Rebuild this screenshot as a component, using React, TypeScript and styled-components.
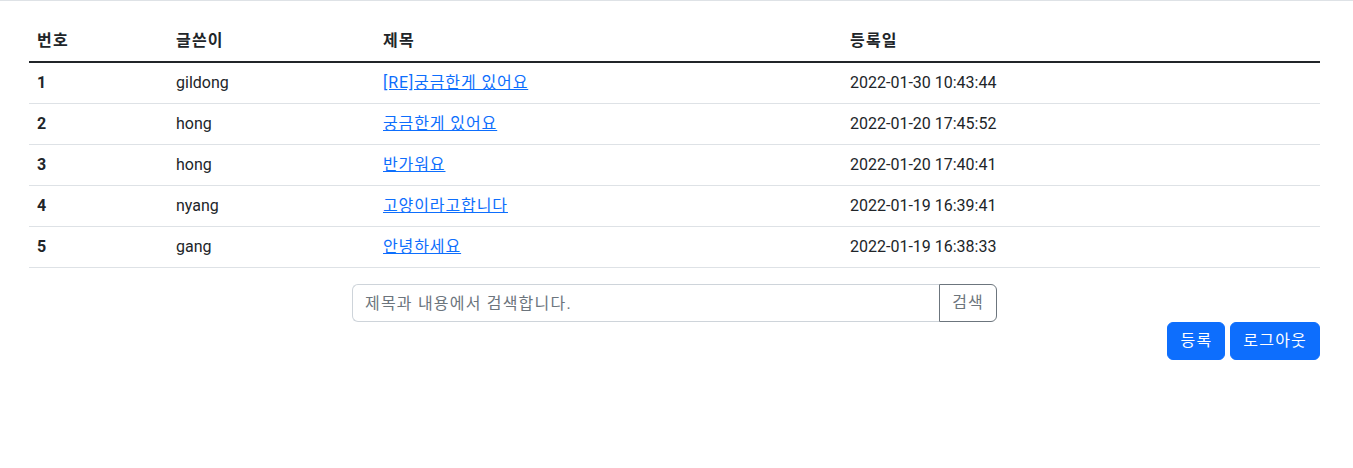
import styled, { createGlobalStyle } from "styled-components";

interface IPost {
    no: number;
    writer: string;
    title: string;
    regDate: string;
}

const posts: IPost[] = [
    {no: 1, writer: "gildong", title: "[RE]궁금한게 있어요", regDate: "2022-01-30 10:43:44"},
    {no: 2, writer: "hong", title: "궁금한게 있어요", regDate: "2022-01-20 17:45:52"},
    {no: 3, writer: "hong", title: "반가워요", regDate: "2022-01-20 17:40:41"},
    {no: 4, writer: "nyang", title: "고양이라고합니다", regDate: "2022-01-19 16:39:41"},
    {no: 5, writer: "gang", title: "안녕하세요", regDate: "2022-01-19 16:38:33"},
];

export default function App() {
    return <>
        <GlobalStyle/>
        <Page>
            <Table>
                <colgroup>
                    <col style={{width: 139}}/>
                    <col style={{width: 207}}/>
                    <col style={{width: 467}}/>
                    <col/>
                </colgroup>
                <thead>
                <tr>
                    <HeadCell>번호</HeadCell>
                    <HeadCell>글쓴이</HeadCell>
                    <HeadCell>제목</HeadCell>
                    <HeadCell>등록일</HeadCell>
                </tr>
                </thead>
                <tbody>
                {posts.map(post => <tr key={post.no}>
                    <RowHead scope="row">{post.no}</RowHead>
                    <Cell>{post.writer}</Cell>
                    <Cell><TitleLink href="#">{post.title}</TitleLink></Cell>
                    <Cell>{post.regDate}</Cell>
                </tr>)}
                </tbody>
            </Table>
            <SearchGroup>
                <SearchInput placeholder="제목과 내용에서 검색합니다."/>
                <SearchButton>검색</SearchButton>
            </SearchGroup>
            <Actions>
                <PrimaryButton>등록</PrimaryButton>
                <PrimaryButton>로그아웃</PrimaryButton>
            </Actions>
        </Page>
    </>
}

const GlobalStyle = createGlobalStyle`
  body {
    margin: 0;
    font-family: Roboto, "Noto Sans CJK KR", sans-serif;
    font-size: 16px;
    line-height: 1.5;
    color: #212529;
    background: #fff;
  }
`

// korean glyphs in the original are a bit wider than Noto CJK
const hangulSpacing = "1.2px";

const Page = styled.div`
  border-top: 1px solid #dee2e6;
  padding: 20px 33px 0 29px;
`

const Table = styled.table`
  width: 100%;
  border-collapse: collapse;
  margin-bottom: 16px;
`

const HeadCell = styled.th`
  text-align: left;
  font-weight: 700;
  padding: 8px;
  letter-spacing: ${hangulSpacing};
  border-bottom: 2px solid #212529;
`

const Cell = styled.td`
  padding: 8px;
  border-bottom: 1px solid #dee2e6;
`

const RowHead = styled.th`
  text-align: left;
  font-weight: 700;
  padding: 8px;
  border-bottom: 1px solid #dee2e6;
`

const TitleLink = styled.a`
  color: #0d6efd;
  letter-spacing: 0.9px;
  text-decoration: underline;
`

const SearchGroup = styled.div`
  display: flex;
  width: 645px;
  margin: 0 auto;
`

const SearchInput = styled.input`
  flex: 1;
  height: 38px;
  box-sizing: border-box;
  padding: 6px 12px;
  font: inherit;
  letter-spacing: ${hangulSpacing};
  color: #212529;
  border: 1px solid #ced4da;
  border-right: none;
  border-radius: 6px 0 0 6px;
  outline: none;

  &::placeholder {
    color: #6c757d;
  }
`

const SearchButton = styled.button`
  height: 38px;
  box-sizing: border-box;
  padding: 6px 12px;
  font: inherit;
  letter-spacing: ${hangulSpacing};
  color: #6c757d;
  background: transparent;
  border: 1px solid #6c757d;
  border-radius: 0 6px 6px 0;
`

const Actions = styled.div`
  display: flex;
  justify-content: flex-end;
  gap: 5px;
`

const PrimaryButton = styled.button`
  height: 38px;
  box-sizing: border-box;
  padding: 6px 12px;
  font: inherit;
  letter-spacing: ${hangulSpacing};
  color: #fff;
  background: #0d6efd;
  border: 1px solid #0d6efd;
  border-radius: 6px;
`
